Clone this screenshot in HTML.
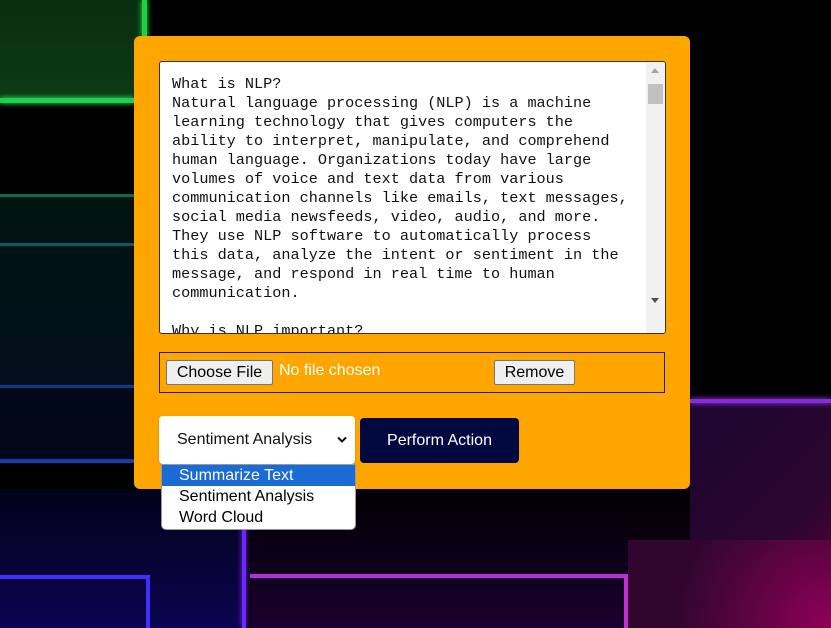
<!DOCTYPE html>
<html><head><style>
html,body{margin:0;padding:0}
body{width:831px;height:628px;overflow:hidden;position:relative;background:#000;font-family:"Liberation Sans",Arial,sans-serif}
.bg{position:absolute}
.panel{position:absolute;left:134px;top:36px;width:556px;height:453px;background:#FFA500;border-radius:6px}
.ta{position:absolute;left:159px;top:61px;width:505px;height:271px;background:#fff;border:1px solid #333;border-radius:3px;overflow:hidden}
.ta pre{margin:0;position:absolute;left:12px;top:13px;font-family:"Liberation Mono",monospace;font-size:15.2px;line-height:19px;color:#111}
.sb{position:absolute;right:0;top:0;width:19px;height:271px;background:#f1f1f1}
.file{position:absolute;left:159px;top:352px;width:504px;height:39px;border:1px solid #222}
.btn{position:absolute;background:#efefef;border:1px solid #767676;border-radius:2px;font-size:16px;color:#000;line-height:23px;text-align:center}
.sel{position:absolute;left:159px;top:416px;width:196px;height:48px;background:#fff;border-radius:4px;box-shadow:0 1px 2px rgba(0,0,0,.2)}
.pa{position:absolute;left:360px;top:418px;width:159px;height:45px;background:#000840;border-radius:4px;color:#fff;font-size:16px;line-height:45px;text-align:center}
.dd{position:absolute;left:161px;top:464px;width:193px;height:64px;background:#fff;border:1px solid #999;border-radius:0 0 5px 5px;font-size:16px;line-height:21px;overflow:hidden}
.dd div{padding-left:17px}
</style></head><body>
<div class="bg" style="left:0;top:0;width:145px;height:100px;background:linear-gradient(#0a2e10,#0b3a16)"></div>
<div class="bg" style="left:142px;top:0;width:5px;height:36px;background:#20d040;box-shadow:0 0 6px #2f4"></div>
<div class="bg" style="left:0;top:98px;width:134px;height:5px;background:#1fd050;box-shadow:0 0 6px #3f6"></div>
<div class="bg" style="left:0;top:194px;width:134px;height:3px;background:#0a6a50"></div>
<div class="bg" style="left:0;top:197px;width:134px;height:190px;background:linear-gradient(#011410,#010f1c)"></div>
<div class="bg" style="left:0;top:243px;width:134px;height:3px;background:#0a5a6a"></div>
<div class="bg" style="left:0;top:385px;width:134px;height:3px;background:#0a3a8a"></div>
<div class="bg" style="left:0;top:388px;width:134px;height:72px;background:#020818"></div>
<div class="bg" style="left:0;top:459px;width:134px;height:4px;background:#1040b0"></div>
<div class="bg" style="left:690px;top:400px;width:141px;height:228px;background:linear-gradient(135deg,#1c0630,#2a0630 60%,#5a0038)"></div>
<div class="bg" style="left:690px;top:399px;width:141px;height:4px;background:#8a2ae0;box-shadow:0 0 6px #a4f"></div>
<div class="bg" style="left:0;top:489px;width:243px;height:139px;background:linear-gradient(#020218,#0c0450)"></div>
<div class="bg" style="left:242px;top:489px;width:4px;height:139px;background:#6a2aff;box-shadow:0 0 6px #82f"></div>
<div class="bg" style="left:0;top:575px;width:148px;height:4px;background:#4030ff"></div>
<div class="bg" style="left:146px;top:575px;width:4px;height:53px;background:#4030ff"></div>
<div class="bg" style="left:250px;top:489px;width:440px;height:139px;background:linear-gradient(#000,#1a0030)"></div>
<div class="bg" style="left:250px;top:574px;width:378px;height:4px;background:#b030e0"></div>
<div class="bg" style="left:624px;top:574px;width:4px;height:54px;background:#c030d0"></div>
<div class="bg" style="left:628px;top:540px;width:203px;height:88px;background:radial-gradient(circle at 100% 100%,#900058,#30062e 70%)"></div>

<div class="panel"></div>
<div class="ta"><pre>What is NLP?
Natural language processing (NLP) is a machine
learning technology that gives computers the
ability to interpret, manipulate, and comprehend
human language. Organizations today have large
volumes of voice and text data from various
communication channels like emails, text messages,
social media newsfeeds, video, audio, and more.
They use NLP software to automatically process
this data, analyze the intent or sentiment in the
message, and respond in real time to human
communication.

Why is NLP important?</pre>
<div class="sb"><div style="position:absolute;left:5px;top:6px;width:0;height:0;border-left:4px solid transparent;border-right:4px solid transparent;border-bottom:5px solid #a3a3a3"></div><div style="position:absolute;left:2px;top:22px;width:15px;height:20px;background:#c1c1c1"></div><div style="position:absolute;left:5px;top:236px;width:0;height:0;border-left:4px solid transparent;border-right:4px solid transparent;border-top:5px solid #505050"></div></div>
</div>
<div class="file"></div>
<div class="btn" style="left:166px;top:360px;width:105px;height:23px">Choose File</div>
<div style="position:absolute;left:279px;top:362px;color:#fff;font-size:16px">No file chosen</div>
<div class="btn" style="left:494px;top:360px;width:79px;height:23px">Remove</div>
<div class="sel"><span style="position:absolute;left:18px;top:15px;font-size:16px;color:#111">Sentiment Analysis</span>
<svg style="position:absolute;left:178px;top:20px" width="10" height="8"><path d="M1 1.5L5 5.5L9 1.5" stroke="#111" stroke-width="2" fill="none"/></svg></div>
<div class="pa">Perform Action</div>
<div class="dd"><div style="background:#1a6bd6;color:#fff">Summarize Text</div><div>Sentiment Analysis</div><div>Word Cloud</div></div>
</body></html>
